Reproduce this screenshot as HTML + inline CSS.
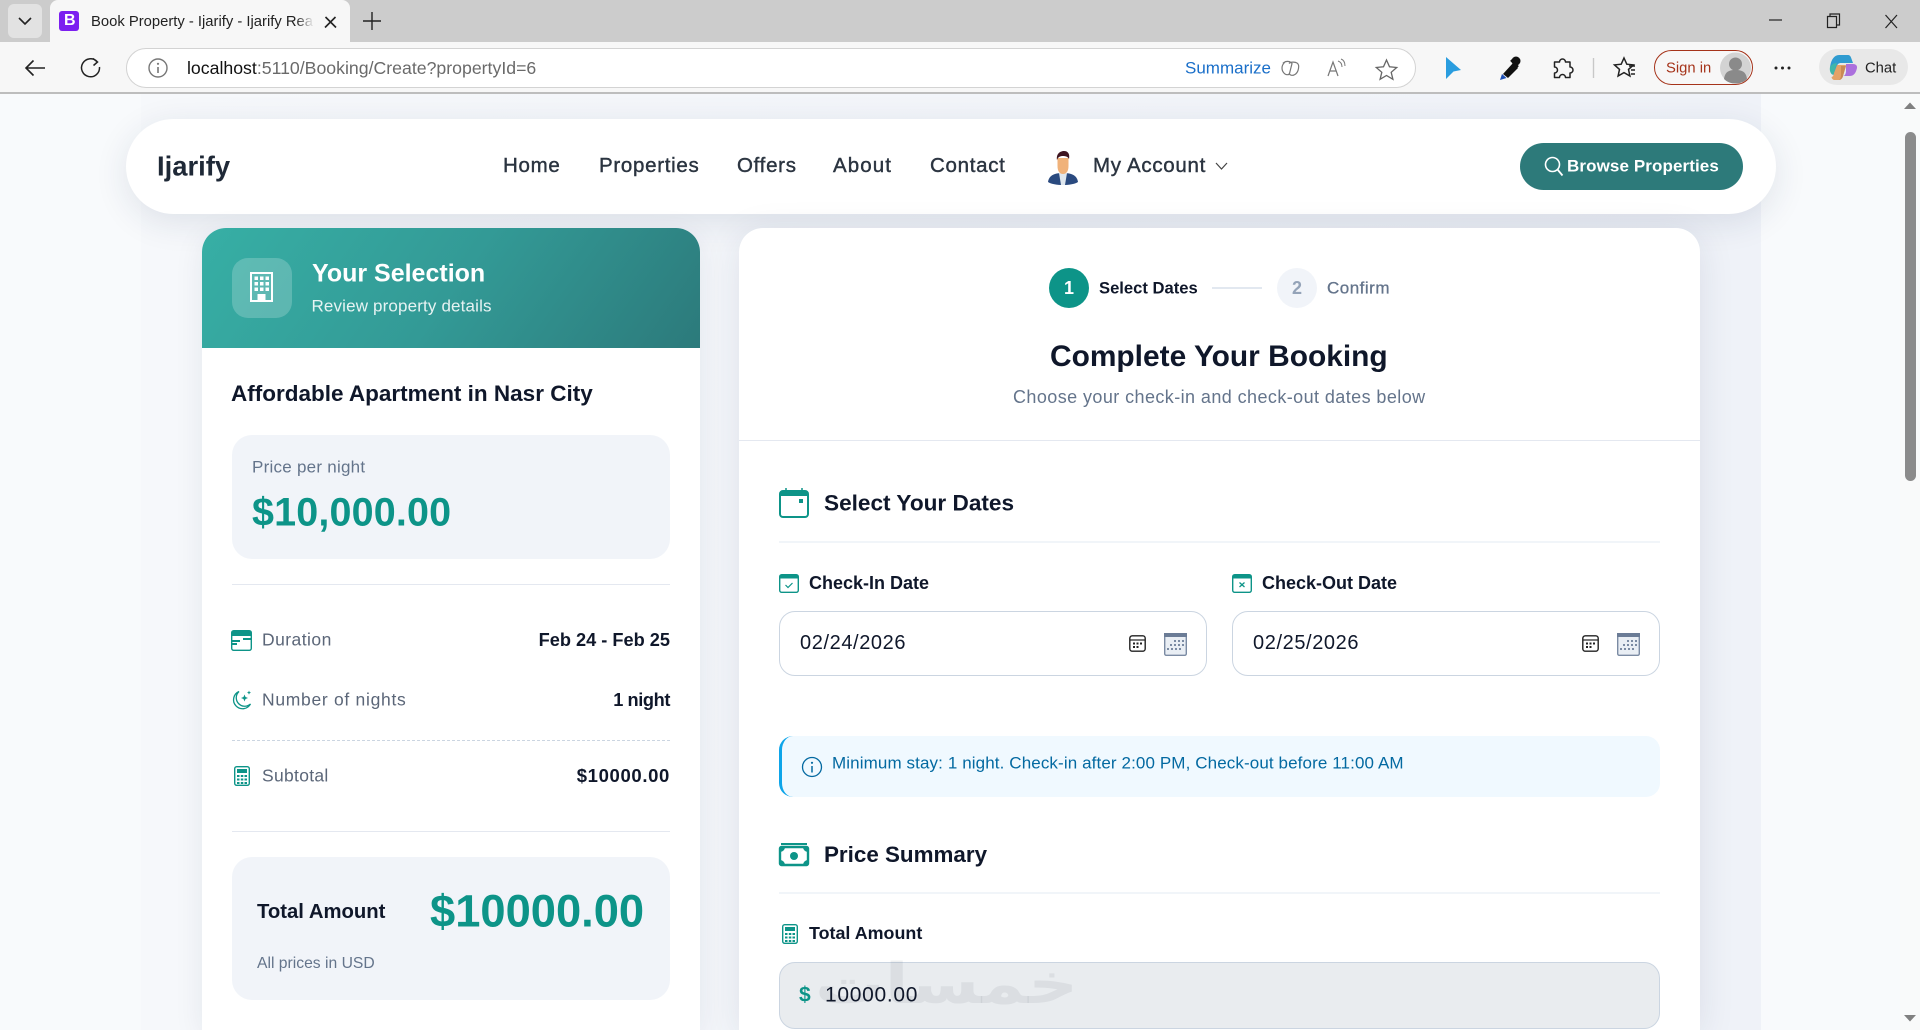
<!DOCTYPE html>
<html lang="en">
<head>
<meta charset="utf-8">
<title>Book Property - Ijarify</title>
<style>
html,body{margin:0;padding:0;width:1920px;height:1030px;overflow:hidden;background:#f8fafc;font-family:"Liberation Sans",Arial,sans-serif;color:#0f172a}
body{position:relative}
.a{position:absolute;box-sizing:border-box}
.t{position:absolute;white-space:nowrap;line-height:1;transform:translateY(-50%)}
.b{font-weight:700}
.m{-webkit-text-stroke:.3px currentColor}
svg{position:absolute;overflow:visible}
.nav{font-size:20.5px;letter-spacing:.7px;color:#2b3440;-webkit-text-stroke:.4px #2b3440}
.lbl{font-size:17.5px;letter-spacing:.45px;color:#5b6678}
.val{font-size:18.2px;font-weight:700;color:#0f172a}
.sec{font-weight:700;font-size:22.6px;color:#0f172a}
.fl{font-weight:700;font-size:18px;color:#0f172a}
.inp{background:#fff;border:1.5px solid #cbd5e1;border-radius:16px}
.date{font-size:20px;letter-spacing:.6px;color:#0f172a}
</style>
</head>
<body>

<!-- page background -->
<div class="a" style="left:141px;top:94px;width:1620px;height:936px;background:linear-gradient(90deg,#f6f8fb 0%,#eff2f8 100%)"></div>

<!-- browser tab strip -->
<div class="a" style="left:0;top:0;width:1920px;height:42px;background:#cccccc"></div>
<div class="a" style="left:8px;top:4px;width:34px;height:34px;background:#e2e2e2;border-radius:6px"></div>
<svg style="left:0;top:0" width="60" height="42"><path d="M19 18l6 6 6-6" fill="none" stroke="#222" stroke-width="1.6"/></svg>
<div class="a" style="left:50px;top:0;width:300px;height:42px;background:#f7f7f7;border-radius:8px 8px 0 0"></div>
<div class="a" style="left:59px;top:11px;width:20px;height:20px;background:#7c1ff0;border-radius:3px"></div>
<div class="t b" style="left:64px;top:21px;font-size:16px;color:#fff">B</div>
<div class="t" style="left:91px;top:22px;font-size:14.8px;color:#222;width:223px;overflow:hidden;line-height:18px">Book Property - Ijarify - Ijarify Rea</div>
<div class="a" style="left:296px;top:10px;width:18px;height:22px;background:linear-gradient(90deg,rgba(247,247,247,0),#f7f7f7)"></div>
<svg style="left:320px;top:12px" width="22" height="20"><path d="M5.500 5l10.500 10.500M15.500 5l-10.500 10.500" stroke="#222" stroke-width="1.600" fill="none"/></svg>
<svg style="left:360px;top:9px" width="24" height="24"><path d="M12 3v18M3 12h18" stroke="#222" stroke-width="1.400" fill="none"/></svg>
<svg style="left:1760px;top:8px" width="150" height="28">
  <path d="M9 12h13" stroke="#222" stroke-width="1.200"/>
  <path d="M67.500 8.500h9v11h-9zM70 8.500v-2.500h9.500v11h-3" fill="none" stroke="#222" stroke-width="1.200"/>
  <path d="M125.500 7l11.500 13M137 7l-11.500 13" stroke="#222" stroke-width="1.200"/>
</svg>

<!-- browser toolbar -->
<div class="a" style="left:0;top:42px;width:1920px;height:50px;background:#f7f7f7"></div>
<div class="a" style="left:0;top:92px;width:1920px;height:2px;background:#bdbdbd"></div>
<svg style="left:20px;top:56px" width="90" height="24">
  <path d="M6 12h19M13.500 4.500L6 12l7.500 7.500" fill="none" stroke="#222" stroke-width="1.600"/>
  <path d="M77 5.500a9 9 0 1 0 2.500 5.500M73 2.500l4.500 3.500-4 3.500" fill="none" stroke="#222" stroke-width="1.500"/>
</svg>
<div class="a" style="left:126px;top:48px;width:1290px;height:40px;background:#fff;border:1.500px solid #d3d3d3;border-radius:20px"></div>
<svg style="left:148px;top:58px" width="20" height="20"><circle cx="10" cy="10" r="9" fill="none" stroke="#777" stroke-width="1.400"/><path d="M10 9v6" stroke="#777" stroke-width="1.600"/><circle cx="10" cy="5.800" r="1.100" fill="#777"/></svg>
<div class="t" style="left:187px;top:69px;font-size:17.7px;color:#6a6a6a"><span style="color:#111">localhost</span>:5110/Booking/Create?propertyId=6</div>
<div class="t" style="left:1185px;top:68px;font-size:17px;color:#1a6fc9">Summarize</div>
<svg style="left:1280px;top:58px" width="130" height="22">
  <path d="M4 4.500c2-1.500 5-1.500 7 0l1 1-2.500 10c-.5 1.500-3 1.500-4.500.5-2-1.500-3-4-3-6s1-4 2.500-5.500z" fill="none" stroke="#777" stroke-width="1.200"/>
  <path d="M9 5.500c1.500-1.500 5.500-2 8-.5 1.500 1 2 3 1.500 5.500-.5 3-2 5.500-4.500 6.500-2 .7-4 .2-4.500-1" fill="none" stroke="#777" stroke-width="1.200"/>
  <path d="M48 18l5-14 5 14M50 13h6" fill="none" stroke="#777" stroke-width="1.200"/>
  <path d="M58 3c3 1 4 3 4 6M61 1c3 1 4 4 4 7" fill="none" stroke="#777" stroke-width="1"/>
  <path d="M106.500 2l3 6.800 7.200.7-5.500 4.800 1.700 7-6.400-3.800-6.400 3.800 1.700-7-5.500-4.800 7.200-.7z" fill="none" stroke="#666" stroke-width="1.300"/>
</svg>
<svg style="left:1440px;top:54px" width="210" height="28">
  <path d="M6 3l15 13-7.500 1.500L6 25z" fill="#2a9ddf"/>
  <path d="M63 20l10-11 5 5-10 10z" fill="#111"/>
  <circle cx="76" cy="7" r="4.500" fill="#111"/>
  <path d="M71 6l7 7" stroke="#111" stroke-width="2.500"/>
  <path d="M60 26l2-6 4.500 4z" fill="#1d4fb5"/>
  <path d="M119.500 8a3 3 0 0 1 6 0h4.500v5a3 3 0 0 1 0 6v4.500h-4.500a3 3 0 0 0-6 0h-5V19a3 3 0 0 0 0-6V8z" fill="none" stroke="#222" stroke-width="1.500" stroke-linejoin="round"/>
  <path d="M153.500 4v20" stroke="#c8c8c8" stroke-width="1.400"/>
  <path d="M184 4l2.800 6.200 6.700.7-5 4.500 1.400 6.600-5.900-3.400-5.900 3.400 1.400-6.600-5-4.500 6.700-.7z" fill="none" stroke="#222" stroke-width="1.500"/>
  <path d="M189 12h6M191 16h4M191 20h4" stroke="#222" stroke-width="1.400"/>
</svg>
<div class="a" style="left:1654px;top:50px;width:99px;height:35px;border:1.500px solid #a5331a;border-radius:18px"></div>
<div class="t" style="left:1666px;top:69px;font-size:14.800px;color:#a5331a">Sign in</div>
<svg style="left:1720px;top:52px" width="32" height="32"><circle cx="15.500" cy="16" r="15.500" fill="#d3d3d3"/><circle cx="15.500" cy="12" r="6.500" fill="#8a8a8a"/><path d="M4 27c1-8 6-9 11.500-9S26 19 27 27c-3 3-7 4.500-11.500 4.500S7 30 4 27z" fill="#8a8a8a"/></svg>
<svg style="left:1772px;top:62px" width="22" height="12"><circle cx="4" cy="6" r="1.500" fill="#222"/><circle cx="10.500" cy="6" r="1.500" fill="#222"/><circle cx="17" cy="6" r="1.500" fill="#222"/></svg>
<div class="a" style="left:1819px;top:49px;width:89px;height:36px;background:#e8e8e8;border-radius:18px"></div>
<svg style="left:1829px;top:53px" width="29" height="29">
  <path d="M10 2h9c1.500 0 2.500 1 3 2.500L24 10H12c-2 0-3.500 1-4 3L6 20c-.5 1.500-2 2.500-3 1-2-2-2.500-6-1.500-9.500C2.500 7 5 2 10 2z" fill="#2f9bd0"/>
  <path d="M1 14c3-4 5-4 9-4H8c-.5 1-.5 2-1 3l-2 7c-.5 1.500-1.500 2-2.500 1C1 19 .5 17 1 14z" fill="#3fb6a8"/>
  <path d="M5 20l3-8h9l-3 11c-.5 2-2 4-4 4H6c-2 0-3-1-3.500-3 1.500 0 2.200-2 2.500-4z" fill="#e3a267"/>
  <path d="M17 11h7c2.500 0 4.500 1.500 4 4-.8 3.500-2.500 8-7 8h-7c2 0 2.500-2 3-4z" fill="#ab70dd"/>
  <path d="M12 13h5l-3 10c-.5 2-2 4-4 4 1.500-1 2-3 2-5z" fill="#c98a55"/>
</svg>
<div class="t" style="left:1865px;top:69px;font-size:14.800px;color:#222">Chat</div>

<!-- scrollbar -->
<div class="a" style="left:1900px;top:94px;width:20px;height:936px;background:#f9fafa"></div>
<svg style="left:1900px;top:98px" width="20" height="14"><path d="M4 11l6-6.500 6 6.500z" fill="#808080"/></svg>
<div class="a" style="left:1905px;top:132px;width:11px;height:349px;background:#8b8b8b;border-radius:6px"></div>
<svg style="left:1900px;top:1012px" width="20" height="14"><path d="M4 3l6 6.500 6-6.500z" fill="#808080"/></svg>

<!-- navbar -->
<div class="a" style="left:126px;top:119px;width:1650px;height:95px;background:#fff;border-radius:48px;box-shadow:0 8px 34px rgba(30,41,79,.11)"></div>
<div class="t b" style="left:157px;top:166px;font-size:27.400px;color:#1f2937">Ijarify</div>
<div class="t nav" style="left:503px;top:166px">Home</div>
<div class="t nav" style="left:599px;top:166px">Properties</div>
<div class="t nav" style="left:737px;top:166px">Offers</div>
<div class="t nav" style="left:833px;top:166px;letter-spacing:1.100px">About</div>
<div class="t nav" style="left:930px;top:166px">Contact</div>
<svg style="left:1047px;top:150px" width="32" height="36">
  <path d="M1 32c1-7 7-9 15-9s14 2 15 9c-3 2-9 3-15 3S4 34 1 32z" fill="#2a4a7f"/>
  <path d="M12 23h8l-2 12h-4z" fill="#dfe7ee"/>
  <path d="M10.500 8h11v8c0 5-2 8-5.500 8s-5.500-3-5.500-8z" fill="#f0b27a"/>
  <path d="M10 10c-1-6 3-9 7-9s6 3 5 8c-1-2-3-3-6-3s-5 1-6 4z" fill="#3e1420"/>
</svg>
<div class="t nav" style="left:1093px;top:166px;letter-spacing:.7px">My Account</div>
<svg style="left:1214px;top:160px" width="16" height="12"><path d="M2 3l5.500 6L13 3" fill="none" stroke="#444" stroke-width="1.200"/></svg>
<div class="a" style="left:1520px;top:143px;width:223px;height:47px;background:#2d7a7a;border-radius:24px"></div>
<svg style="left:1544px;top:156px" width="20" height="22"><circle cx="8.500" cy="8.500" r="7" fill="none" stroke="#fff" stroke-width="1.600"/><path d="M13.500 13.500l5 6" stroke="#fff" stroke-width="1.800"/></svg>
<div class="t b" style="left:1567px;top:166px;font-size:17px;letter-spacing:.1px;color:#fff">Browse Properties</div>

<!-- left card -->
<div class="a" style="left:202px;top:228px;width:498px;height:802px;background:#fff;border-radius:24px 24px 0 0;box-shadow:0 6px 30px rgba(30,41,79,.08)"></div>
<div class="a" style="left:202px;top:228px;width:498px;height:120px;background:linear-gradient(125deg,#37afa5 0%,#339a96 50%,#2c7a7b 100%);border-radius:24px 24px 0 0"></div>
<div class="a" style="left:232px;top:258px;width:60px;height:60px;background:rgba(255,255,255,.2);border-radius:16px"></div>
<svg style="left:250px;top:272px" width="24" height="30">
  <rect x="1" y="1" width="21" height="28" fill="none" stroke="#fff" stroke-width="2"/>
  <g fill="#fff">
    <rect x="4.500" y="4.500" width="3.500" height="3.500"/><rect x="10" y="4.500" width="3.500" height="3.500"/><rect x="15.500" y="4.500" width="3.500" height="3.500"/>
    <rect x="4.500" y="10" width="3.500" height="3.500"/><rect x="10" y="10" width="3.500" height="3.500"/><rect x="15.500" y="10" width="3.500" height="3.500"/>
    <rect x="4.500" y="15.500" width="3.500" height="3.500"/><rect x="10" y="15.500" width="3.500" height="3.500"/><rect x="15.500" y="15.500" width="3.500" height="3.500"/>
    <rect x="7.500" y="22" width="8" height="7"/>
  </g>
</svg>
<div class="t b" style="left:312px;top:274px;font-size:25px;color:#fff">Your Selection</div>
<div class="t" style="left:311.500px;top:306px;font-size:17px;letter-spacing:.15px;color:rgba(255,255,255,.88)">Review property details</div>

<div class="t b" style="left:231px;top:394px;font-size:22.500px;color:#0f172a">Affordable Apartment in Nasr City</div>

<div class="a" style="left:232px;top:435px;width:438px;height:124px;background:#f1f4f9;border-radius:20px"></div>
<div class="t" style="left:252px;top:467px;font-size:17px;letter-spacing:.25px;color:#64748b">Price per night</div>
<div class="t b" style="left:252px;top:513px;font-size:39.500px;letter-spacing:.15px;color:#0d9488">$10,000.00</div>

<div class="a" style="left:232px;top:584px;width:438px;height:1px;background:#e4e8f0"></div>

<svg style="left:231px;top:630px" width="21" height="21">
  <rect x=".7" y=".7" width="19.600" height="19.600" rx="2" fill="none" stroke="#0d9488" stroke-width="1.400"/>
  <rect x="1" y="1" width="19" height="5" fill="#0d9488"/>
  <path d="M1 10h8v2H1zM12 8h8v2h-8zM1 13h5v2H1z" fill="#0d9488"/>
</svg>
<div class="t lbl" style="left:262px;top:640px">Duration</div>
<div class="t val" style="right:1250px;top:640px">Feb 24 - Feb 25</div>

<svg style="left:231px;top:690px" width="21" height="21">
  <path d="M8 1.500A9 9 0 1 0 19.500 14 8 8 0 0 1 8 1.500z" fill="none" stroke="#0d9488" stroke-width="1.300"/>
  <path d="M13.500 4.500l1 2.500 2.500 1-2.500 1-1 2.500-1-2.500-2.500-1 2.500-1zM18 .5l.6 1.500 1.400.6-1.400.6-.6 1.400-.6-1.400-1.400-.6 1.400-.6z" fill="#0d9488"/>
</svg>
<div class="t lbl" style="left:262px;top:700px;letter-spacing:.7px">Number of nights</div>
<div class="t val" style="right:1250px;top:700px;letter-spacing:-.4px">1 night</div>

<div class="a" style="left:232px;top:740px;width:438px;height:0;border-top:1px dashed #cbd5e1"></div>

<svg style="left:234px;top:766px" width="16" height="20">
  <rect x=".7" y=".7" width="14.600" height="18.600" rx="2" fill="none" stroke="#0d9488" stroke-width="1.400"/>
  <rect x="3" y="3" width="10" height="4" fill="#0d9488"/>
  <g fill="#0d9488"><rect x="3" y="9" width="2.500" height="2"/><rect x="6.800" y="9" width="2.500" height="2"/><rect x="10.500" y="9" width="2.500" height="2"/><rect x="3" y="12.500" width="2.500" height="2"/><rect x="6.800" y="12.500" width="2.500" height="2"/><rect x="10.500" y="12.500" width="2.500" height="2"/><rect x="3" y="16" width="2.500" height="2"/><rect x="6.800" y="16" width="2.500" height="2"/><rect x="10.500" y="16" width="2.500" height="2"/></g>
</svg>
<div class="t lbl" style="left:262px;top:776px;letter-spacing:.3px">Subtotal</div>
<div class="t val" style="right:1250px;top:776px;font-size:18.500px;letter-spacing:.65px">$10000.00</div>

<div class="a" style="left:232px;top:831px;width:438px;height:1px;background:#e4e8f0"></div>

<div class="a" style="left:232px;top:857px;width:438px;height:143px;background:#f1f4f9;border-radius:20px"></div>
<div class="t b" style="left:257px;top:912px;font-size:20.300px;color:#0f172a">Total Amount</div>
<div class="t b" style="left:430px;top:911px;font-size:45.300px;color:#0d9488">$10000.00</div>
<div class="t" style="left:257px;top:964px;font-size:15.700px;color:#64748b">All prices in USD</div>

<!-- right card -->
<div class="a" style="left:739px;top:228px;width:961px;height:802px;background:#fff;border-radius:24px 24px 0 0;box-shadow:0 6px 36px rgba(30,41,79,.10)"></div>

<div class="a" style="left:1049px;top:268px;width:40px;height:40px;border-radius:50%;background:#0d9488"></div>
<div class="t b" style="left:1064px;top:288px;font-size:18px;color:#fff">1</div>
<div class="t b" style="left:1099px;top:289px;font-size:16.600px;color:#0f172a">Select Dates</div>
<div class="a" style="left:1212px;top:287px;width:50px;height:2px;background:#e2e8f0"></div>
<div class="a" style="left:1277px;top:268px;width:40px;height:40px;border-radius:50%;background:#f1f4f9"></div>
<div class="t b" style="left:1292px;top:288px;font-size:18px;color:#94a3b8">2</div>
<div class="t m" style="left:1327px;top:288px;font-size:17px;letter-spacing:.5px;color:#64748b">Confirm</div>

<div class="t b" style="left:1050px;top:357px;font-size:29.900px;color:#0f172a">Complete Your Booking</div>
<div class="t" style="left:1013px;top:397px;font-size:18px;letter-spacing:.42px;color:#64748b">Choose your check-in and check-out dates below</div>
<div class="a" style="left:739px;top:440px;width:961px;height:1px;background:#e4e8f0"></div>

<!-- select dates -->
<svg style="left:779px;top:488px" width="30" height="30">
  <rect x="1" y="3" width="28" height="26" rx="3" fill="none" stroke="#0d9488" stroke-width="2"/>
  <path d="M1 7V6a3 3 0 0 1 3-3h22a3 3 0 0 1 3 3v2H1z" fill="#0d9488"/>
  <path d="M7 0v4M23 0v4" stroke="#0d9488" stroke-width="1.500"/>
  <rect x="20" y="11" width="4" height="4" fill="#0d9488"/>
</svg>
<div class="t sec" style="left:824px;top:504px">Select Your Dates</div>
<div class="a" style="left:779px;top:541px;width:881px;height:2px;background:#f1f5f9"></div>

<svg style="left:779px;top:573px" width="20" height="20">
  <rect x=".7" y="1.700" width="18.600" height="17.600" rx="2" fill="none" stroke="#0d9488" stroke-width="1.400"/>
  <rect x="1" y="1.500" width="18" height="4" fill="#0d9488"/>
  <path d="M6.500 12l2.500 2.500 4.500-4.500" fill="none" stroke="#0d9488" stroke-width="1.200"/>
</svg>
<div class="t fl" style="left:809px;top:583px">Check-In Date</div>
<div class="a inp" style="left:779px;top:611px;width:428px;height:65px"></div>
<div class="t date" style="left:800px;top:643px">02/24/2026</div>
<svg style="left:1129px;top:633px" width="60" height="22">
  <rect x=".8" y="2.800" width="15.400" height="15.400" rx="2.500" fill="none" stroke="#222" stroke-width="1.400"/>
  <path d="M1 7h15" stroke="#222" stroke-width="1.200"/>
  <g fill="#222"><rect x="4" y="9.500" width="2" height="2"/><rect x="7.500" y="9.500" width="2" height="2"/><rect x="11" y="9.500" width="2" height="2"/><rect x="4" y="13" width="2" height="2"/><rect x="7.500" y="13" width="2" height="2"/></g>
  <rect x="35.700" y=".7" width="21.600" height="21.600" rx="1.500" fill="#e9eef4" stroke="#7b8ba3" stroke-width="1.400"/>
  <rect x="35" y="0" width="23" height="4" fill="#6b7c96"/>
  <g fill="#7b8ba3"><rect x="45" y="7" width="2" height="2"/><rect x="49" y="7" width="2" height="2"/><rect x="53" y="7" width="2" height="2"/><rect x="41" y="11" width="2" height="2"/><rect x="45" y="11" width="2" height="2"/><rect x="49" y="11" width="2" height="2"/><rect x="53" y="11" width="2" height="2"/><rect x="38" y="15" width="2" height="2"/><rect x="42" y="15" width="2" height="2"/><rect x="46" y="15" width="2" height="2"/><rect x="50" y="15" width="2" height="2"/></g>
</svg>

<svg style="left:1232px;top:573px" width="20" height="20">
  <rect x=".7" y="1.700" width="18.600" height="17.600" rx="2" fill="none" stroke="#0d9488" stroke-width="1.400"/>
  <rect x="1" y="1.500" width="18" height="4" fill="#0d9488"/>
  <path d="M7.500 9.500l5 4.500M12.500 9.500l-5 4.500" fill="none" stroke="#0d9488" stroke-width="1.300"/>
</svg>
<div class="t fl" style="left:1262px;top:583px">Check-Out Date</div>
<div class="a inp" style="left:1232px;top:611px;width:428px;height:65px"></div>
<div class="t date" style="left:1253px;top:643px">02/25/2026</div>
<svg style="left:1582px;top:633px" width="60" height="22">
  <rect x=".8" y="2.800" width="15.400" height="15.400" rx="2.500" fill="none" stroke="#222" stroke-width="1.400"/>
  <path d="M1 7h15" stroke="#222" stroke-width="1.200"/>
  <g fill="#222"><rect x="4" y="9.500" width="2" height="2"/><rect x="7.500" y="9.500" width="2" height="2"/><rect x="11" y="9.500" width="2" height="2"/><rect x="4" y="13" width="2" height="2"/><rect x="7.500" y="13" width="2" height="2"/></g>
  <rect x="35.700" y=".7" width="21.600" height="21.600" rx="1.500" fill="#e9eef4" stroke="#7b8ba3" stroke-width="1.400"/>
  <rect x="35" y="0" width="23" height="4" fill="#6b7c96"/>
  <g fill="#7b8ba3"><rect x="45" y="7" width="2" height="2"/><rect x="49" y="7" width="2" height="2"/><rect x="53" y="7" width="2" height="2"/><rect x="41" y="11" width="2" height="2"/><rect x="45" y="11" width="2" height="2"/><rect x="49" y="11" width="2" height="2"/><rect x="53" y="11" width="2" height="2"/><rect x="38" y="15" width="2" height="2"/><rect x="42" y="15" width="2" height="2"/><rect x="46" y="15" width="2" height="2"/><rect x="50" y="15" width="2" height="2"/></g>
</svg>

<!-- alert -->
<div class="a" style="left:779px;top:736px;width:881px;height:61px;background:#f0f9ff;border-left:3px solid #0ea5e9;border-radius:14px"></div>
<svg style="left:801px;top:756px" width="22" height="22"><circle cx="11" cy="11" r="9.500" fill="none" stroke="#0369a1" stroke-width="1.300"/><path d="M11 10v6.500" stroke="#0369a1" stroke-width="1.500"/><circle cx="11" cy="6.800" r="1.100" fill="#0369a1"/></svg>
<div class="t" style="left:832px;top:763px;font-size:17px;letter-spacing:.11px;color:#0369a1">Minimum stay: 1 night. Check-in after 2:00 PM, Check-out before 11:00 AM</div>

<!-- price summary -->
<svg style="left:779px;top:842px" width="30" height="24">
  <path d="M2 1h26v2H2z" fill="#0d9488"/>
  <rect x="1" y="5" width="28" height="18" rx="1.500" fill="none" stroke="#0d9488" stroke-width="2.400"/>
  <path d="M1 5h5a5 5 0 0 1-5 5zM29 5h-5a5 5 0 0 0 5 5zM1 23h5a5 5 0 0 0-5-5zM29 23h-5a5 5 0 0 1 5-5z" fill="#0d9488"/>
  <circle cx="15" cy="14" r="4" fill="#0d9488"/>
</svg>
<div class="t sec" style="left:824px;top:855px;font-size:22.400px">Price Summary</div>
<div class="a" style="left:779px;top:892px;width:881px;height:2px;background:#f1f5f9"></div>

<svg style="left:782px;top:924px" width="16" height="20">
  <rect x=".7" y=".7" width="14.600" height="18.600" rx="2" fill="none" stroke="#0d9488" stroke-width="1.400"/>
  <rect x="3" y="3" width="10" height="4" fill="#0d9488"/>
  <g fill="#0d9488"><rect x="3" y="9" width="2.500" height="2"/><rect x="6.800" y="9" width="2.500" height="2"/><rect x="10.500" y="9" width="2.500" height="2"/><rect x="3" y="12.500" width="2.500" height="2"/><rect x="6.800" y="12.500" width="2.500" height="2"/><rect x="10.500" y="12.500" width="2.500" height="2"/><rect x="3" y="16" width="2.500" height="2"/><rect x="6.800" y="16" width="2.500" height="2"/><rect x="10.500" y="16" width="2.500" height="2"/></g>
</svg>
<div class="t fl" style="left:809px;top:934px;font-size:17.900px">Total Amount</div>
<div class="a" style="left:779px;top:962px;width:881px;height:67px;background:#e9ecef;border:1.500px solid #cbd5e1;border-radius:16px"></div>
<div class="t b" style="left:815px;top:985px;font-family:'DejaVu Sans',sans-serif;font-size:56px;color:rgba(80,90,100,.09);transform:translateY(-50%) scaleX(1.24);transform-origin:left center">خمسات</div>
<div class="t b" style="left:799px;top:995px;font-size:21px;color:#0d9488">$</div>
<div class="t" style="left:825px;top:995px;font-size:21px;letter-spacing:.7px;color:#0f172a">10000.00</div>

</body>
</html>
